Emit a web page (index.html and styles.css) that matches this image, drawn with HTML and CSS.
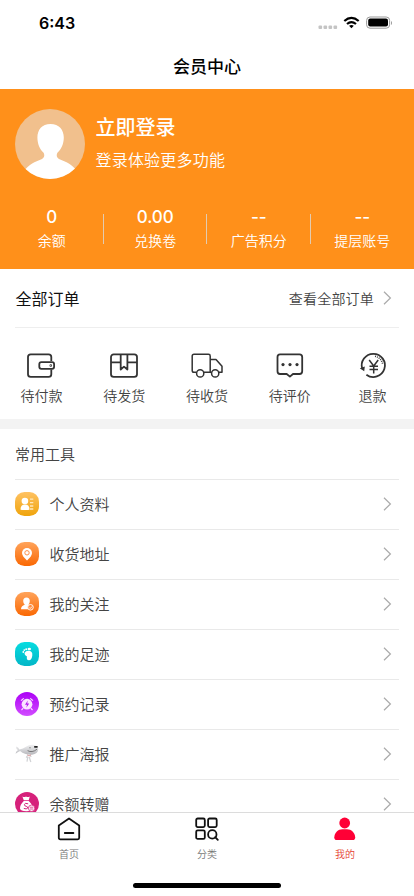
FILE: index.html
```html
<!DOCTYPE html>
<html lang="zh-CN">
<head>
<meta charset="utf-8">
<meta name="viewport" content="width=device-width, initial-scale=1">
<title>会员中心</title>
<link rel="stylesheet" href="styles.css">
</head>
<body>
<header class="status">
  <span class="time">6:43</span>
  <svg width="74" height="14" viewBox="0 0 74 14">
    <g fill="#c4c4c4"><rect x="0.5" y="9.5" width="3.6" height="3.6" rx="1"/><rect x="5.5" y="9.5" width="3.6" height="3.6" rx="1"/><rect x="10.5" y="9.5" width="3.6" height="3.6" rx="1"/><rect x="15.5" y="9.5" width="3.6" height="3.6" rx="1"/></g>
    <g fill="none" stroke="#000" stroke-width="2.2"><path d="M26.3 5Q33.4-1.1 40.7 5"/><path d="M29 8Q33.4 4.2 38 8"/></g>
    <path d="M31.1 9.8Q33.4 8 35.8 9.8L33.4 12.3Z"/>
    <rect x="48.6" y="1" width="23" height="11.2" rx="3.4" fill="none" stroke="#999"/>
    <rect x="50.2" y="2.6" width="19.8" height="8" rx="2"/>
    <path d="M73 5v4q1-.7 1-2t-1-2" fill="#999"/>
  </svg>
</header>
<h1 class="title">会员中心</h1>
<main>
  <section class="member">
    <div class="profile">
      <svg class="avatar" viewBox="0 0 70 70"><defs><clipPath id="round"><circle cx="35" cy="35" r="35"/></clipPath></defs><circle cx="35" cy="35" r="35" fill="#f1c08d"/><path clip-path="url(#round)" fill="#fff" d="M35.5 15C27 15 22.4 20.8 22.4 28.5C22.4 35 24.8 40 28.4 43.6C30 46 29.4 49 26.5 50.2C20 52.6 14 55.5 9 62V72H62V62C57 55.5 51 52.6 44.5 50.2C41.6 49 41 46 42.6 43.6C46.2 40 48.8 35 48.8 28.5C48.8 20.8 44 15 35.5 15Z"/></svg>
      <div class="login"><h2>立即登录</h2><p>登录体验更多功能</p></div>
    </div>
    <div class="stats">
      <div class="stat"><b>0</b><span>余额</span></div>
      <div class="stat"><b>0.00</b><span>兑换卷</span></div>
      <div class="stat"><b>--</b><span>广告积分</span></div>
      <div class="stat"><b>--</b><span>提层账号</span></div>
    </div>
  </section>
  <section class="orders">
    <div class="orders-head"><h3>全部订单</h3><span class="all">查看全部订单</span><svg class="arrow" viewBox="0 0 9 14"><path d="M1 .8L7.4 7L1 13.2"/></svg></div>
    <div class="order-types">
      <div class="type"><svg viewBox="0 0 32 28"><path d="M26.3 9V5Q26.3 2.3 23.6 2.3H5.7Q3 2.3 3 5V22.2Q3 24.9 5.7 24.9H23.6Q26.3 24.9 26.3 22.2V17.5"/><rect x="14.3" y="10.2" width="14.8" height="6.6" rx="2"/><circle cx="25.8" cy="13.5" r=".4"/></svg><span>待付款</span></div>
      <div class="type"><svg viewBox="0 0 32 28"><rect x="3" y="2.3" width="26" height="22.6" rx="2.7"/><path d="M3 10.4H12.7M19.4 10.4H29M12.7 2.3V17.5L16 14.6L19.4 17.5V2.3"/></svg><span>待发货</span></div>
      <div class="type"><svg viewBox="0 0 32 28"><path class="fine" d="M5.4 20.3H3Q1.2 20.3 1.2 18.5V4Q1.2 2.3 3 2.3H17.5Q19.2 2.3 19.2 4V20.3H12.8M19.2 7.5H25L31 14.3V20.3H27.8M19.2 20.3H20.5"/><circle class="fine" cx="9.2" cy="21.4" r="3.6"/><circle class="fine" cx="24.2" cy="21.4" r="3.6"/></svg><span>待收货</span></div>
      <div class="type"><svg viewBox="0 0 32 28"><path d="M6 2.3H25.5Q28.2 2.3 28.2 5V19.3Q28.2 22 25.5 22H19L15.9 24.6L12.7 22H6Q3.5 22 3.5 19.3V5Q3.5 2.3 6 2.3Z"/><g class="dots"><circle cx="9" cy="12.6" r="1.6"/><circle cx="16" cy="12.6" r="1.6"/><circle cx="23" cy="12.6" r="1.6"/></g></svg><span>待评价</span></div>
      <div class="type"><svg viewBox="0 0 32 28"><path d="M5.3 17A11.6 11.6 0 1 1 9.4 22.7"/><path class="fine" stroke-dasharray="1 1" d="M18 4.3A9.3 9.3 0 0 1 25.6 12"/><path class="fine" d="M12.2 8L16.7 14L21.2 8M16.7 14V21.5M12.5 14.2H21M12.5 17.5H21"/><path class="solid" d="M2.8 16.2L7.8 14.4L7.2 19.2Z"/></svg><span>退款</span></div>
    </div>
  </section>
  <section class="tools">
    <h3>常用工具</h3>
    <div class="tool"><svg class="badge" viewBox="0 0 24 24"><defs><linearGradient id="gold" x2="0" y2="1"><stop stop-color="#ffc263"/><stop offset="1" stop-color="#efa40b"/></linearGradient></defs><rect width="24" height="24" rx="9.5" fill="url(#gold)"/><circle cx="9.9" cy="9" r="3.3" fill="#fff"/><path d="M5.5 17.5Q5.5 12.4 10 12.4T14.5 17.5Q14 18 10 18T5.5 17.5" fill="#fff"/><path d="M15 7.2h3.3M15 10.6h3.3M15 14h3.3M15 17h3.3" stroke="#ffe8bd" stroke-width="1.3"/></svg><span>个人资料</span><svg class="arrow" viewBox="0 0 9 14"><path d="M1 .8L7.4 7L1 13.2"/></svg></div>
    <div class="tool"><svg class="badge" viewBox="0 0 24 24"><defs><linearGradient id="orange" x2="0" y2="1"><stop stop-color="#ffa45b"/><stop offset="1" stop-color="#fa6803"/></linearGradient></defs><rect width="24" height="24" rx="9.5" fill="url(#orange)"/><path d="M12 6A5 5 0 0 0 7 11Q7 14 12 18.5Q17 14 17 11A5 5 0 0 0 12 6Z" fill="#fff"/><circle cx="12" cy="10.8" r="2.2" fill="#fff" stroke="#ff9248"/></svg><span>收货地址</span><svg class="arrow" viewBox="0 0 9 14"><path d="M1 .8L7.4 7L1 13.2"/></svg></div>
    <div class="tool"><svg class="badge" viewBox="0 0 24 24"><rect width="24" height="24" rx="9.5" fill="url(#orange)"/><path d="M11.5 5.5Q8.2 5.5 8.2 9Q8.2 11.5 9.8 12.8Q6 13.8 6 17.3H13.5L16.5 13.8L13.4 12.6Q14.8 11.3 14.8 9Q14.8 5.5 11.5 5.5" fill="#fff"/><circle cx="15.5" cy="15.3" r="2.8" fill="#ff8a3c" stroke="#fff" stroke-width=".9"/><path d="M14.1 15.4l1.1 1.1 1.9-2" fill="none" stroke="#fff" stroke-width=".9"/></svg><span>我的关注</span><svg class="arrow" viewBox="0 0 9 14"><path d="M1 .8L7.4 7L1 13.2"/></svg></div>
    <div class="tool"><svg class="badge" viewBox="0 0 24 24"><defs><linearGradient id="teal" x2="0" y2="1"><stop stop-color="#06dce0"/><stop offset="1" stop-color="#03b6c7"/></linearGradient></defs><rect width="24" height="24" rx="9.5" fill="url(#teal)"/><g fill="#fff"><path d="M9.6 10.8Q11 8.4 14 8.8Q17.8 9.4 17.3 13.5Q16.8 18 13.9 18.3Q11.1 18 12 14.4Q9.2 13.2 9.6 10.8Z"/><circle cx="8.3" cy="10" r=".9"/><circle cx="9.3" cy="8.1" r=".9"/><circle cx="11.2" cy="7.2" r="1"/><ellipse cx="14.3" cy="7" rx="1.7" ry="1.2"/></g></svg><span>我的足迹</span><svg class="arrow" viewBox="0 0 9 14"><path d="M1 .8L7.4 7L1 13.2"/></svg></div>
    <div class="tool"><svg class="badge" viewBox="0 0 24 24"><defs><linearGradient id="purple" x2="0" y2="1"><stop stop-color="#ac00f6"/><stop offset="1" stop-color="#d14cff"/></linearGradient></defs><circle cx="12" cy="12" r="12" fill="url(#purple)"/><g fill="none" stroke="#fae6ff" stroke-width="1.1"><path d="M6 8.7L8.7 6.3M15.3 6.3L18 8.7M8.2 16.2L6.5 18M15.8 16.2L17.5 18"/></g><circle cx="12" cy="12.2" r="5.4" fill="#fae6ff"/><path d="M12.8 8.5L10 12.7H12L11.3 15.7L14.2 11.5H12.2Z" fill="#b51bf1"/></svg><span>预约记录</span><svg class="arrow" viewBox="0 0 9 14"><path d="M1 .8L7.4 7L1 13.2"/></svg></div>
    <div class="tool"><svg class="badge" viewBox="0 0 24 24"><defs><linearGradient id="silver" x2="0" y2="1"><stop stop-color="#f0f0f2"/><stop offset="1" stop-color="#b7b8bc"/></linearGradient></defs><path d="M1 4.5Q3.5 5.2 4.4 7.4Q8 7 11 4.8Q14 2.5 18 2.8Q22.8 3.6 23.3 7.5Q22.8 11.8 17 12.8Q10 13.2 5.1 9.1Q2.6 10.3.6 11.8Q.6 9.5 3 8Q1 6.8 1 4.5" fill="url(#silver)"/><path d="M13 13L11.2 15.6M12.8 15L12 19.6M15 13L16.2 15M14.2 15L15.8 20" fill="none" stroke="#d2d3d6" stroke-width="1.3"/><path d="M12.6 8.6Q17 11.2 22 7.2" fill="none" stroke="#555" stroke-width=".7"/><rect x="19" y="4" width="3.8" height="1.8" rx=".8" fill="#222"/><circle cx="15" cy="5.7" r=".5" fill="#333"/><path d="M12.4 12.8L14 14L16 12.8" fill="none" stroke="#d98989" stroke-width=".8"/></svg><span>推广海报</span><svg class="arrow" viewBox="0 0 9 14"><path d="M1 .8L7.4 7L1 13.2"/></svg></div>
    <div class="tool"><svg class="badge" viewBox="0 0 24 24"><circle cx="12" cy="12" r="12" fill="#d6217b"/><path d="M7.4 4.4Q9.3 5.6 11 4.4Q12.8 5.6 14.8 4.4L13.7 8.2H8.8ZM8.8 9H13.7Q18 12.8 17.7 16.5Q17.2 19.3 11.4 19.3T5 16.5Q4.8 12.8 8.8 9Z" fill="#fff"/><path d="M13.2 11.8Q9.6 10.4 9.4 12.7Q9.4 14 11.2 14.3Q13.3 14.8 12.6 16.2Q11.6 17.5 8.8 16.4" fill="none" stroke="#d6217b" stroke-width="1"/><circle cx="16.6" cy="16.2" r="3.2" fill="#fff" stroke="#d6217b" stroke-width=".8"/><path d="M14.8 15.2h3.6M14.8 17h3.6" stroke="#d6217b" stroke-width=".8"/></svg><span>余额转赠</span><svg class="arrow" viewBox="0 0 9 14"><path d="M1 .8L7.4 7L1 13.2"/></svg></div>
  </section>
</main>
<footer>
  <nav>
    <a><svg viewBox="0 0 24 24"><path d="M1.8 8.4L12 1.5L22.2 8.4V20.8Q22.2 22.3 20.7 22.3H3.3Q1.8 22.3 1.8 20.8ZM7.8 16H16.4"/></svg><span>首页</span></a>
    <a><svg viewBox="0 0 24 24"><g><rect x="1.2" y="1.5" width="8.6" height="8.6" rx="1.5"/><rect x="13.1" y="1.5" width="8.6" height="8.6" rx="1.5"/><rect x="1.2" y="13.3" width="8.6" height="8.6" rx="1.5"/><circle cx="17.3" cy="17.4" r="4.2"/><path d="M20.2 20.2L22.8 22.8"/></g></svg><span>分类</span></a>
    <a class="active"><svg viewBox="0 0 24 24"><circle cx="11.7" cy="6" r="5.4"/><path d="M1.3 20.2C1.6 15.7 5 12.3 9.4 12.3H14C18.4 12.3 21.8 15.7 22.2 20.2Q22.2 23 20 23H3.5Q1.3 23 1.3 20.2Z"/></svg><span>我的</span></a>
  </nav>
  <div class="home-bar"></div>
</footer>
</body>
</html>
```
FILE: styles.css
```css
* { box-sizing: border-box; margin: 0; padding: 0; }
body {
  height: 896px;
  overflow: hidden;
  display: flex;
  flex-direction: column;
  background: #fff;
  color: #333;
  font-family: "Noto Sans CJK SC", sans-serif;
  font-weight: 350;
}
svg { display: block; flex: none; }
.status {
  height: 44px;
  flex: none;
  display: flex;
  justify-content: space-between;
  align-items: center;
  padding: 1px 22px 0 39px;
}
.time { font: 600 16px/20px Inter, sans-serif; color: #000; }
.title {
  height: 45px;
  flex: none;
  text-align: center;
  font-size: 17px;
  line-height: 44px;
  font-weight: 500;
  color: #000;
}
main { flex: 1; min-height: 0; overflow: hidden; }
.member { height: 180px; background: #ff901a; color: #fff; padding-top: 20px; }
.profile { display: flex; gap: 10.5px; padding-left: 15px; }
.avatar { width: 70px; height: 70px; }
.login h2 { font-size: 20px; line-height: 30px; font-weight: 500; padding-top: 3px; }
.login p { font-size: 16px; line-height: 24px; letter-spacing: .2px; margin-top: 5px; }
.stats { display: grid; grid-template-columns: repeat(4, 1fr); margin-top: 26px; }
.stat {
  height: 54px;
  display: flex;
  flex-direction: column;
  align-items: center;
  background: linear-gradient(#e3cbb0, #e3cbb0) right 9px / 1px 30px no-repeat;
}
.stat:last-child { background: none; }
.stat b { font: 500 17px/24px Inter, sans-serif; }
.stat span { font-size: 14px; line-height: 22px; }
.orders { height: 160px; border-bottom: 10px solid #f3f3f3; }
.orders-head {
  height: 59px;
  margin: 0 15px;
  border-bottom: 1px solid #eee;
  display: flex;
  align-items: center;
}
.orders-head h3 { flex: 1; font-size: 16px; line-height: 24px; font-weight: 400; color: #111; padding-left: .5px; }
.all { font-size: 14px; letter-spacing: .2px; margin-right: 9px; color: #444; }
.arrow { width: 9px; height: 14px; margin-right: 7px; fill: none; stroke: #aaa; stroke-width: 1.2; }
.order-types { display: grid; grid-template-columns: repeat(5, 1fr); padding-top: 24px; }
.type { display: flex; flex-direction: column; align-items: center; font-size: 14px; line-height: 20px; color: #444; }
.type svg { width: 32px; height: 28px; margin-bottom: 5px; fill: none; stroke: #333; stroke-width: 1.8; stroke-linejoin: round; }
.type svg .fine { stroke-width: 1.5; }
.type svg .dots, .type svg .solid { fill: #333; stroke: none; }
.tools { padding: 0 15px; }
.tools h3 { height: 51px; border-bottom: 1px solid #e9e9e9; font-size: 15px; line-height: 50px; font-weight: 350; color: #444; }
.tool { height: 50px; padding-bottom: 1px; border-bottom: 1px solid #e9e9e9; display: flex; align-items: center; font-size: 15px; line-height: 20px; color: #444; }
.tool span { flex: 1; }
.badge { width: 24px; height: 24px; margin-right: 10.5px; }
footer { height: 84px; flex: none; border-top: 1px solid #dcdcdc; background: #fff; }
nav { display: grid; grid-template-columns: repeat(3, 1fr); height: 70px; padding-top: 4px; }
nav a { display: flex; flex-direction: column; align-items: center; font-size: 10px; line-height: 14px; color: #777; }
nav svg { width: 24px; height: 24px; margin-bottom: 6px; fill: none; stroke: #111; stroke-width: 1.8; stroke-linejoin: round; stroke-linecap: round; }
nav .active { color: #e53b2c; }
nav .active svg { fill: #ff0036; stroke: none; }
.home-bar { width: 148px; height: 5px; margin: 0 auto; border-radius: 3px; background: #000; }
```
